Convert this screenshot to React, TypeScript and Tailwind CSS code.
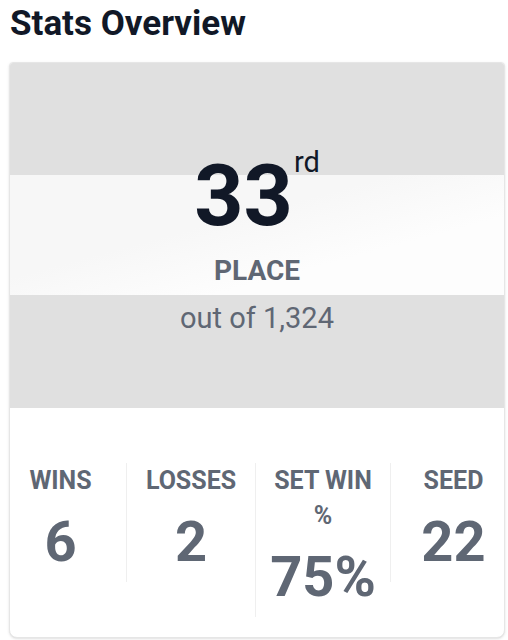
const stats = [
  { label: 'WINS', value: '6', cls: 'pr-[15px]' },
  { label: 'LOSSES', value: '2', cls: 'border-l' },
  { label: 'SET WIN %', value: '75%', cls: 'border-l px-4' },
  { label: 'SEED', value: '22', cls: 'border-l pl-[12px]' },
];

export default function App() {
  return (
    <div className="min-h-[640px] overflow-hidden bg-white font-['Roboto',sans-serif]">
      <h1 className="px-[10px] pt-[4px] text-[35px] font-bold leading-[40px] text-[#111827]">Stats Overview</h1>

      <div className="ml-[9px] mr-[3px] mt-[18px] overflow-hidden rounded-b-lg rounded-t-sm border border-[#e6e6e6] bg-white shadow-sm">
        {/* rank block with the lighter band across the middle */}
        <div className="flex h-[345px] flex-col items-center pt-[90px] [background-image:linear-gradient(to_bottom,#e0e0e0_112px,transparent_112px,transparent_232px,#e0e0e0_232px),linear-gradient(165deg,#f7f7f7_45%,#fdfdfd_60%)]">
          <div className="flex items-start">
            <span className="text-[86px] font-bold leading-none text-[#111827]">33</span>
            <span className="-mt-[5px] ml-[1px] text-[29px] leading-none text-[#111827]">rd</span>
          </div>
          <div className="mt-[14px] text-[28px] font-bold leading-[36px] text-[#5f6774]">PLACE</div>
          <div className="mt-[11px] text-[29px] leading-[36px] text-[#5f6774]">out of 1,324</div>
        </div>

        <div className="grid grid-cols-[116px_129px_135px_1fr] items-start pb-[20px] pt-[55px]">
          {stats.map((s) => (
            <div key={s.label} className={`flex flex-col items-center border-[#efefef] text-center ${s.cls}`}>
              <div className="text-[25px] font-bold leading-[35px] text-[#5f6774]">{s.label}</div>
              <div className="mt-[4px] text-[56px] font-bold leading-[80px] text-[#5f6774]">{s.value}</div>
            </div>
          ))}
        </div>
      </div>
    </div>
  );
}
